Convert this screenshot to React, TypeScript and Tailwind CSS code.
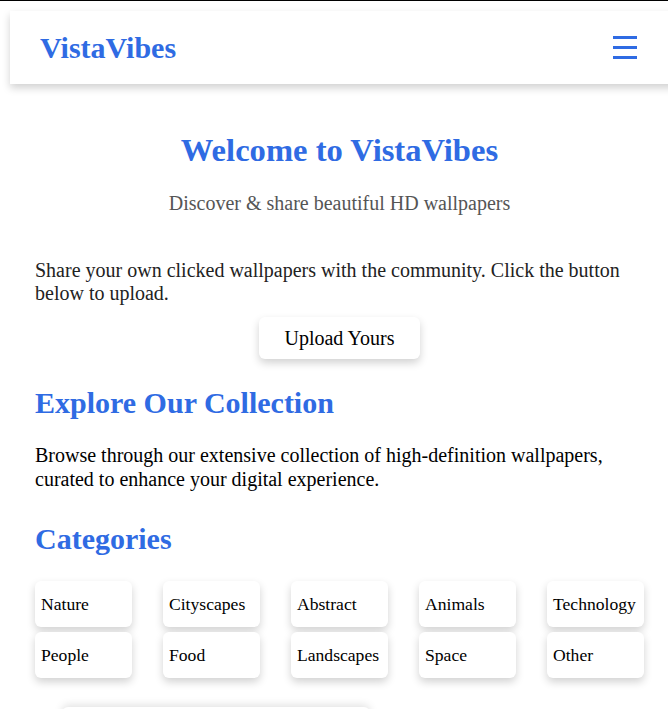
import { useState } from 'react'

const CATEGORIES = [
  'Nature',
  'Cityscapes',
  'Abstract',
  'Animals',
  'Technology',
  'People',
  'Food',
  'Landscapes',
  'Space',
  'Other',
]

export default function App() {
  const [menuOpen, setMenuOpen] = useState(false)

  return (
    <div className="h-[709px] overflow-hidden bg-white border-t border-black font-['Liberation_Serif',serif] text-[#222]">
      {/* Header */}
      <header className="ml-[10px] mt-[10px] w-[680px] h-[73px] bg-white shadow-[0_4px_8px_rgba(0,0,0,0.18)] flex items-center justify-between pl-[30px] pr-[53px]">
        <span className="text-[30px] font-bold text-[#2f6be3]">VistaVibes</span>
        <button
          onClick={() => setMenuOpen(!menuOpen)}
          className="flex flex-col gap-[7.5px] w-[24px] py-1"
          aria-label="menu"
        >
          <span className="block h-[2.5px] w-[24px] bg-[#2f6be3]" />
          <span className="block h-[2.5px] w-[24px] bg-[#2f6be3]" />
          <span className="block h-[2.5px] w-[24px] bg-[#2f6be3]" />
        </button>
      </header>

      <main className="pl-[35px] pr-[24px]">
        {/* Hero */}
        <section className="text-center mt-[48px]">
          <h1 className="text-[32.6px] leading-[37px] font-bold text-[#2f6be3]">Welcome to VistaVibes</h1>
          <p className="mt-[23px] text-[20px] leading-[22px] text-[#555]">
            Discover &amp; share beautiful HD wallpapers
          </p>
        </section>

        {/* Upload */}
        <section className="mt-[45px]">
          <p className="text-[20px] leading-[23px] text-[#222] pr-[20px]">
            Share your own clicked wallpapers with the community. Click the button below to upload.
          </p>
          <div className="flex justify-center mt-[12px]">
            <button className="h-[42px] px-[25px] bg-white rounded-[6px] text-[20px] text-black shadow-[0_4px_8px_rgba(0,0,0,0.18)]">
              Upload Yours
            </button>
          </div>
        </section>

        {/* Explore */}
        <section className="mt-[27px]">
          <h2 className="text-[30px] leading-[33px] font-bold text-[#2f6be3]">Explore Our Collection</h2>
          <p className="mt-[25px] text-[20px] leading-[23.5px] text-black">
            Browse through our extensive collection of high-definition wallpapers, curated to enhance your digital experience.
          </p>
        </section>

        {/* Categories */}
        <section className="mt-[31px]">
          <h2 className="text-[30px] leading-[33px] font-bold text-[#2f6be3]">Categories</h2>
          <div className="mt-[26px] grid grid-cols-[repeat(5,97px)] gap-x-[31px] gap-y-[5px]">
            {CATEGORIES.map((c) => (
              <div
                key={c}
                className="h-[46px] bg-white rounded-[6px] flex items-center px-[6px] text-[17.6px] text-black whitespace-nowrap shadow-[0_4px_8px_rgba(0,0,0,0.18)]"
              >
                {c}
              </div>
            ))}
          </div>
        </section>

        {/* Next card, cut off */}
        <div className="mt-[29px] ml-[27px] w-[308px] h-[120px] bg-white rounded-[6px] shadow-[0_-2px_8px_rgba(0,0,0,0.12)]" />
      </main>
    </div>
  )
}
